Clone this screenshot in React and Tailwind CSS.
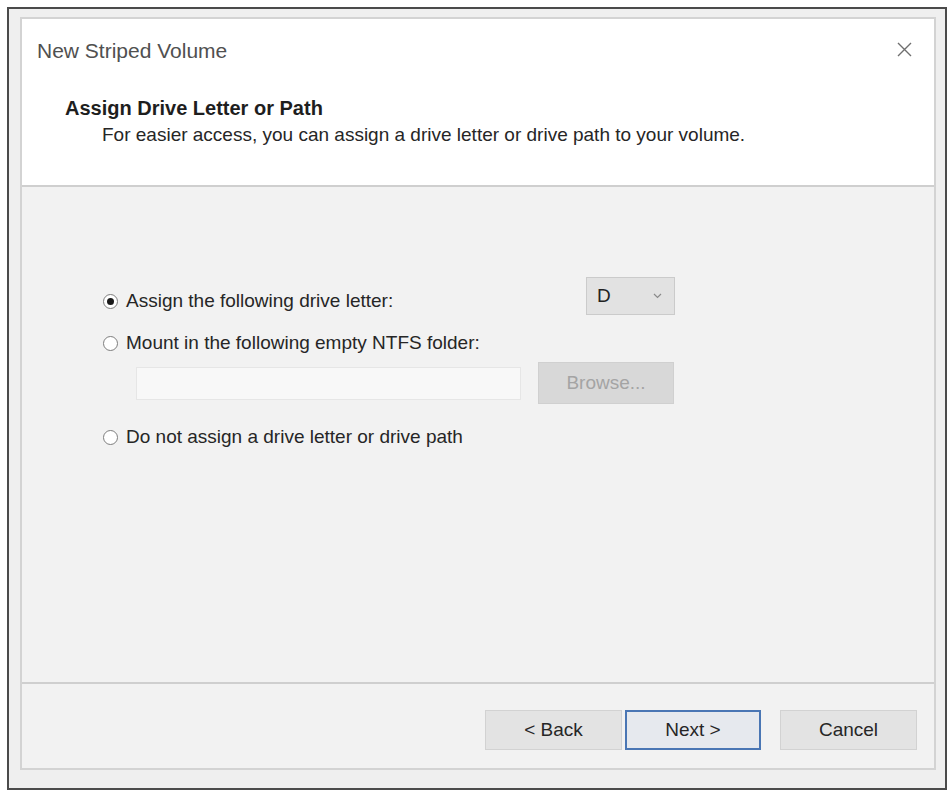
import React, { useState } from 'react';

const font = { fontFamily: '"Liberation Sans", Arial, sans-serif' };

function Radio({ checked, label, onSelect }) {
  return (
    <button
      type="button"
      onClick={onSelect}
      className="flex items-center h-[24px] text-left"
    >
      <span className="w-[15px] h-[15px] rounded-full border border-[#7d7d7d] bg-white flex items-center justify-center shrink-0">
        {checked && <span className="w-[7px] h-[7px] rounded-full bg-[#1a1a1a]"></span>}
      </span>
      <span className="ml-[8px] text-[19px] leading-[24px] text-[#262626]">{label}</span>
    </button>
  );
}

function WizardButton({ children, primary }) {
  return (
    <button
      type="button"
      className={`h-[40px] text-[19px] text-[#262626] ${
        primary
          ? 'w-[136px] border-2 border-[#4a76b4] bg-[#e6e9ee]'
          : 'w-[137px] border border-[#d2d2d2] bg-[#e3e3e3]'
      }`}
    >
      {children}
    </button>
  );
}

export default function App() {
  const [choice, setChoice] = useState('letter');

  return (
    <div className="w-[951px] h-[790px] bg-white pt-[7px] pl-[7px] pr-[4px]" style={font}>
      <div className="h-[783px] border-2 border-[#4b4b4b] bg-[#efefef] pt-[8px] pl-[11px] pr-[9px] pb-[18px]">
        <div className="h-full border-2 border-[#d3d3d3] flex flex-col">
          {/* header */}
          <div className="h-[166px] bg-white border-b-2 border-[#cfcfcf] shrink-0 box-content">
            <div className="h-[64px] flex items-center justify-between pl-[15px] pr-[22px]">
              <span className="text-[21px] text-[#505050]">New Striped Volume</span>
              <svg width="15" height="15" viewBox="0 0 15 15" className="mt-[-4px]">
                <path d="M1 1 L14 14 M14 1 L1 14" stroke="#6f6f6f" strokeWidth="1.4" fill="none" />
              </svg>
            </div>
            <div className="mt-[13px] pl-[43px] text-[20px] leading-[24px] font-bold text-[#1e1e1e]">
              Assign Drive Letter or Path
            </div>
            <div className="mt-[3px] pl-[80px] text-[19px] leading-[24px] text-[#262626]">
              For easier access, you can assign a drive letter or drive path to your volume.
            </div>
          </div>

          {/* body */}
          <div className="flex-1 bg-[#f2f2f2] border-b-2 border-[#cfcfcf] pl-[81px]">
            <div className="w-[572px] mt-[102px] flex flex-col">
              <div className="flex items-start justify-between h-[24px]">
                <Radio
                  checked={choice === 'letter'}
                  label="Assign the following drive letter:"
                  onSelect={() => setChoice('letter')}
                />
                <div className="-mt-[12px] w-[89px] h-[38px] border border-[#cbcbcb] bg-[#e2e2e2] flex items-center justify-between pl-[10px] pr-[12px]">
                  <span className="text-[19px] text-[#222]">D</span>
                  <svg width="9" height="6" viewBox="0 0 9 6">
                    <path d="M1 1 L4.5 4.5 L8 1" stroke="#8a8a8a" strokeWidth="1.2" fill="none" />
                  </svg>
                </div>
              </div>

              <div className="mt-[18px]">
                <Radio
                  checked={choice === 'folder'}
                  label="Mount in the following empty NTFS folder:"
                  onSelect={() => setChoice('folder')}
                />
              </div>

              <div className="mt-[7px] h-[42px] flex items-center">
                <div className="ml-[33px] w-[385px] h-[33px] border border-[#e6e6e6] bg-[#f8f8f8]"></div>
                <button
                  type="button"
                  disabled
                  className="ml-[17px] w-[136px] h-[42px] bg-[#d8d8d8] border border-[#d0d0d0] text-[19px] text-[#a4a4a4]"
                >
                  Browse...
                </button>
              </div>

              <div className="mt-[21px]">
                <Radio
                  checked={choice === 'none'}
                  label="Do not assign a drive letter or drive path"
                  onSelect={() => setChoice('none')}
                />
              </div>
            </div>
          </div>

          {/* footer */}
          <div className="h-[84px] shrink-0 bg-[#f2f2f2] flex justify-end items-start pt-[26px] pr-[17px]">
            <WizardButton>&lt; Back</WizardButton>
            <div className="ml-[3px]">
              <WizardButton primary>Next &gt;</WizardButton>
            </div>
            <div className="ml-[19px]">
              <WizardButton>Cancel</WizardButton>
            </div>
          </div>
        </div>
      </div>
    </div>
  );
}
